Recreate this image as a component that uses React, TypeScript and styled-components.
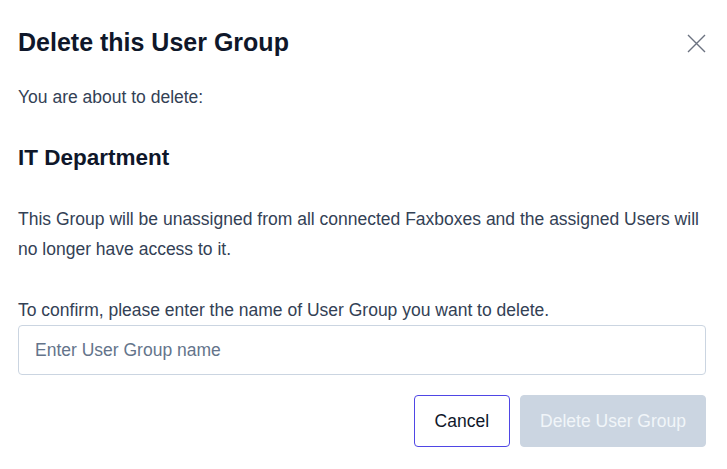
import styled, { createGlobalStyle } from "styled-components";

const GlobalStyle = createGlobalStyle`
  body {
    margin: 0;
    background: #ffffff;
    font-family: "Liberation Sans", Arial, sans-serif;
  }
`;

const Modal = styled.div`
  width: 727px;
  height: 469px;
  box-sizing: border-box;
  padding: 28px 21px 0 18px;
  display: flex;
  flex-direction: column;
`;

const Header = styled.div`
  display: flex;
  align-items: center;
  justify-content: space-between;
  height: 28px;
`;

const Title = styled.h2`
  margin: 0;
  font-size: 25px;
  line-height: 28px;
  font-weight: 700;
  color: #0f172a;
`;

const CloseButton = styled.button`
  width: 20px;
  height: 20px;
  padding: 0;
  border: none;
  background: none;
  display: flex;
  align-items: center;
  justify-content: center;
  color: #6b7280;
  cursor: pointer;
  margin-top: 2px;
`;

const Text = styled.p<{ $top: number; $lh?: number }>`
  margin: ${(p) => p.$top}px 0 0;
  font-size: 17.5px;
  line-height: ${(p) => p.$lh ?? 24}px;
  color: #334155;
`;

const GroupName = styled.h3`
  margin: 35px 0 0;
  font-size: 22.5px;
  line-height: 28px;
  font-weight: 700;
  color: #0f172a;
`;

const NameInput = styled.input`
  margin-top: 5px;
  height: 50px;
  box-sizing: border-box;
  width: 688px;
  border: 1px solid #cbd5e1;
  border-radius: 4px;
  padding: 0 16px;
  font-family: inherit;
  font-size: 17.5px;
  color: #0f172a;
  outline: none;
  &::placeholder {
    color: #64748b;
  }
`;

const Actions = styled.div`
  margin-top: 20px;
  width: 688px;
  display: flex;
  justify-content: flex-end;
  gap: 10px;
`;

const Button = styled.button<{ $variant: "outline" | "danger" }>`
  height: 52px;
  box-sizing: border-box;
  border-radius: 4px;
  font-family: inherit;
  font-size: 17.5px;
  padding: 0 ${(p) => (p.$variant === "outline" ? 20 : 19)}px;
  border: 1px solid
    ${(p) => (p.$variant === "outline" ? "#4f46e5" : "#cbd5e1")};
  background: ${(p) => (p.$variant === "outline" ? "#ffffff" : "#cbd5e1")};
  color: ${(p) => (p.$variant === "outline" ? "#0f172a" : "#f1f5f9")};
  cursor: ${(p) => (p.$variant === "outline" ? "pointer" : "not-allowed")};
`;

function App() {
  return (
    <>
      <GlobalStyle />
      <Modal>
        <Header>
          <Title>Delete this User Group</Title>
          <CloseButton aria-label="Close">
            <svg width="19" height="19" viewBox="0 0 19 19" fill="none">
              <path
                d="M1 1L18 18M18 1L1 18"
                stroke="currentColor"
                strokeWidth="1.4"
              />
            </svg>
          </CloseButton>
        </Header>
        <Text $top={29}>You are about to delete:</Text>
        <GroupName>IT Department</GroupName>
        <Text $top={32} $lh={30}>
          This Group will be unassigned from all connected Faxboxes and the
          assigned Users will no longer have access to it.
        </Text>
        <Text $top={36} $lh={20}>
          To confirm, please enter the name of User Group you want to delete.
        </Text>
        <NameInput placeholder="Enter User Group name" />
        <Actions>
          <Button $variant="outline">Cancel</Button>
          <Button $variant="danger" disabled>
            Delete User Group
          </Button>
        </Actions>
      </Modal>
    </>
  );
}

export default App;
